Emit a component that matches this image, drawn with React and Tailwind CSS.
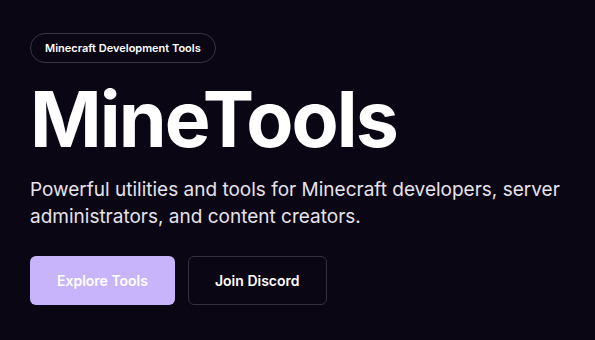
import React from "react";

const App = () => {
  return (
    <div
      className="min-h-screen w-full bg-[#0b0614] text-white px-[30px] pt-[33px]"
      style={{ fontFamily: "Inter, 'Noto Sans', sans-serif" }}
    >
      <div className="inline-flex items-center h-[30px] px-[14px] rounded-full border border-[#3a3446] text-[11px] font-semibold">
        Minecraft Development Tools
      </div>

      <h1 className="mt-[18px] text-[77px] leading-none font-bold tracking-tight">MineTools</h1>

      <p className="mt-[18px] text-[19px] leading-[27px] text-[#e6e3ec]">
        Powerful utilities and tools for Minecraft developers, server
        administrators, and content creators.
      </p>

      <div className="mt-[26px] flex gap-[13px]">
        <button className="h-[49px] px-[27px] rounded-md bg-[#c8b4fb] text-white text-[14px] font-semibold">
          Explore Tools
        </button>
        <button className="h-[49px] px-[26px] rounded-md border border-[#34303f] text-white text-[14px] font-semibold">
          Join Discord
        </button>
      </div>
    </div>
  );
};

export default App;
